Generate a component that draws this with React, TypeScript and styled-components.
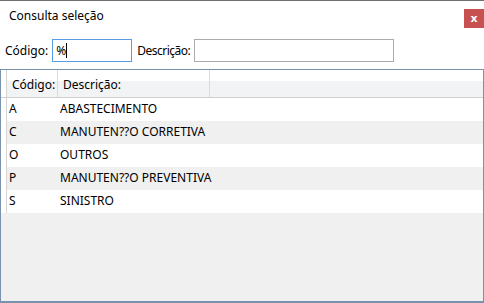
import styled, { createGlobalStyle } from "styled-components";

const GlobalStyle = createGlobalStyle`
    html, body {
        margin: 0;
        padding: 0;
        background: #ffffff;
    }
    body {
        font-family: "Noto Sans", "Open Sans", sans-serif;
        font-size: 12px;
        color: #000000;
    }
`

const rows = [
    {code: "A", desc: "ABASTECIMENTO"},
    {code: "C", desc: "MANUTEN??O CORRETIVA"},
    {code: "O", desc: "OUTROS"},
    {code: "P", desc: "MANUTEN??O PREVENTIVA"},
    {code: "S", desc: "SINISTRO"},
];

export default function App() {
    return (
        <>
            <GlobalStyle/>
            <Window>
                <TitleBar>
                    <Title>Consulta seleção</Title>
                    <CloseButton>x</CloseButton>
                </TitleBar>
                <FilterRow>
                    <Label>Código:</Label>
                    <Field width={80} gapAfter={5} focused>
                        %<Caret/>
                    </Field>
                    <Label narrow>Descrição:</Label>
                    <Field width={200}/>
                </FilterRow>
                <Grid>
                    <HeaderRow>
                        <RowHeader/>
                        <HeaderCell width={51}>Código:</HeaderCell>
                        <HeaderCell width={152}>Descrição:</HeaderCell>
                        <HeaderFill/>
                    </HeaderRow>
                    {rows.map((r, i) => (
                        <DataRow key={r.code} alt={i % 2 === 1}>
                            <RowHeader/>
                            <Cell width={51}>{r.code}</Cell>
                            <Cell width={152}>{r.desc}</Cell>
                        </DataRow>
                    ))}
                </Grid>
            </Window>
        </>
    );
}

const Window = styled.div`
    width: 484px;
    height: 303px;
    display: flex;
    flex-direction: column;
    border-top: 1px solid #707070;
    box-sizing: border-box;
    overflow: hidden;`

const TitleBar = styled.div`
    height: 31px;
    display: flex;
    align-items: center;
    justify-content: space-between;
    padding-left: 9px;`

const Title = styled.span`
    font-size: 12px;
    margin-top: -3px;`

const CloseButton = styled.div`
    width: 20px;
    height: 19px;
    margin-top: 3px;
    background: #c75050;
    color: #ffffff;
    font-family: "DejaVu Sans", sans-serif;
    font-weight: bold;
    font-size: 11px;
    display: flex;
    align-items: center;
    justify-content: center;
    line-height: 1;`

const FilterRow = styled.div`
    height: 37px;
    display: flex;
    align-items: flex-start;
    padding: 7px 0 0 5px;
    box-sizing: border-box;`

const Label = styled.span<{ narrow?: boolean }>`
    line-height: 23px;
    margin-right: 4px;
    white-space: nowrap;
    letter-spacing: ${p => p.narrow ? "-0.5px" : "0"};`

const Field = styled.div<{ width: number; focused?: boolean; gapAfter?: number }>`
    width: ${p => p.width}px;
    height: 23px;
    box-sizing: border-box;
    border: 1px solid ${p => p.focused ? "#569de5" : "#ababab"};
    padding: 0 0 0 3px;
    display: flex;
    align-items: center;
    line-height: 1;
    margin-right: ${p => p.gapAfter ?? 0}px;`

const Caret = styled.span`
    display: inline-block;
    width: 1px;
    height: 15px;
    background: #000000;`

const Grid = styled.div`
    flex: 1;
    border: 1px solid #7a92ad;
    border-bottom-width: 2px;
    background: #f0f0f0;
    display: flex;
    flex-direction: column;`

const HeaderRow = styled.div`
    height: 27px;
    display: flex;
    border-bottom: 1px solid #cfcfcf;
    background: linear-gradient(to bottom, #ffffff 0%, #ffffff 40%, #f2f3f5 41%, #f2f3f5 100%);`

const RowHeader = styled.div`
    width: 5px;
    flex: none;
    border-right: 1px solid #d5d5d5;
    background: #ffffff;`

const HeaderCell = styled.div<{ width: number }>`
    width: ${p => p.width}px;
    flex: none;
    box-sizing: border-box;
    padding-left: 5px;
    border-right: 1px solid #dcdcdc;
    display: flex;
    align-items: center;
    padding-top: 1px;
    white-space: nowrap;`

const HeaderFill = styled.div`
    flex: 1;`

const DataRow = styled.div<{ alt?: boolean }>`
    height: 23px;
    display: flex;
    background: ${p => p.alt ? "#f0f0f0" : "#ffffff"};`

const Cell = styled.div<{ width: number }>`
    width: ${p => p.width}px;
    flex: none;
    box-sizing: border-box;
    padding: 0 0 3px 2px;
    display: flex;
    align-items: center;
    white-space: nowrap;`
